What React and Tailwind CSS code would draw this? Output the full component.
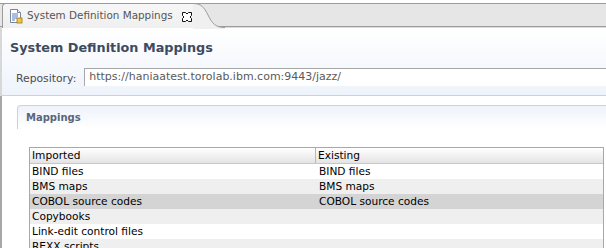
import React from 'react';

const rows = [
  { imported: 'BIND files', existing: 'BIND files' },
  { imported: 'BMS maps', existing: 'BMS maps' },
  { imported: 'COBOL source codes', existing: 'COBOL source codes', selected: true },
  { imported: 'Copybooks', existing: '' },
  { imported: 'Link-edit control files', existing: '' },
  { imported: 'REXX scripts', existing: '' },
];

const DocIcon = () => (
  <svg width="16" height="16" viewBox="0 0 16 16">
    <path d="M2.5 1.5h7l3 3v10h-10z" fill="#fff" stroke="#7a8699" />
    <path d="M9.5 1.5v3h3" fill="#e6ebf2" stroke="#7a8699" />
    <path d="M4 6h6M4 8h6M4 10h5M4 12h3" stroke="#4f7cc4" strokeWidth="1" />
    <rect x="9" y="10" width="5" height="5" fill="#f5c542" stroke="#a07818" strokeWidth="0.8" />
  </svg>
);

const CloseIcon = () => (
  <svg width="12" height="12" viewBox="0 0 12 12">
    <path d="M1.5 1.5h3l1.5 1.5 1.5-1.5h3v3l-1.5 1.5 1.5 1.5v3h-3l-1.5-1.5-1.5 1.5h-3v-3l1.5-1.5-1.5-1.5z" fill="#fff" stroke="#111" strokeWidth="1" />
  </svg>
);

export default function App() {
  return (
    <div className="w-[606px] h-[248px] overflow-hidden bg-white text-[11px] text-black" style={{ fontFamily: '"DejaVu Sans", "Liberation Sans", sans-serif' }}>
      {/* tab bar */}
      <div className="pt-[3px] bg-white">
        <div className="relative h-[24px] border-t border-b border-[#9c9c9c] bg-[#e6e6e6] flex">
          <div className="-mt-px -mb-px ml-[2px] flex items-center h-[25px] pl-[5px] pr-[2px] bg-gradient-to-b from-[#f7f7f7] to-[#efefef] border-l border-t border-[#9c9c9c] rounded-tl-[4px] relative">
            <DocIcon />
            <span className="ml-[3px] text-[#555] text-[10.4px]">System Definition Mappings</span>
            <span className="ml-[8px] mt-[1px] flex items-center"><CloseIcon /></span>
            <svg className="absolute right-[-30px] top-[-1px]" width="32" height="26" viewBox="0 0 32 26">
              <path d="M0 0.5 C8 0.5 11 4 15 12 C19 20 22 24.5 32 24.5 L32 26 L0 26z" fill="#f0f0f0" />
              <path d="M0 0.5 C8 0.5 11 4 15 12 C19 20 22 24.5 32 24.5" fill="none" stroke="#9c9c9c" />
            </svg>
          </div>
        </div>
        <div className="h-px bg-[#dcdcdc]" />
      </div>

      {/* header area */}
      <div className="border-l-2 border-[#d8d8d8] bg-gradient-to-b from-white to-[#eef3fb]">
        <div className="h-[40px] flex items-center pl-[8px]">
          <span className="font-bold text-[12.8px] text-[#3e4a5e]">System Definition Mappings</span>
        </div>
        <div className="flex items-start h-[28px] border-b border-[#c5d3e8]">
          <span className="ml-[14px] mt-[3px] text-[#4c4c4c] text-[10.8px]">Repository:</span>
          <div className="ml-[8px] flex-1 h-[18px] border-t border-l border-[#a8a8a8] bg-white flex items-center pl-[4px] text-[#5a5a5a] text-[11px]">
            https://haniaatest.torolab.ibm.com:9443/jazz/
          </div>
        </div>
      </div>

      {/* mappings section */}
      <div className="border-l-2 border-[#a8a8a8] h-[152px] pt-[9px] pl-[15px]">
        <div className="h-[24px] rounded-tl-[4px] border-l border-t border-[#c9d4e3] bg-gradient-to-b from-[#eef3fa] to-white flex items-center pl-[8px]">
          <span className="font-bold text-[10px] text-[#58667c]">Mappings</span>
        </div>
        <div className="mt-[18px] ml-[12px] mr-[2px] border border-[#a8a8a8] border-b-0 text-[10.6px]">
          <div className="flex h-[16px] bg-gradient-to-b from-white to-[#e4e4e4] border-b border-[#c8c8c8] leading-[15px]">
            <div className="w-[286px] pl-[2px] border-r border-[#b8b8b8]">Imported</div>
            <div className="flex-1 pl-[2px]">Existing</div>
          </div>
          {rows.map((r, i) => (
            <div
              key={r.imported}
              className={`flex h-[15px] leading-[15px] ${r.selected ? 'bg-[#d4d4d4]' : i % 2 === 1 ? 'bg-[#efefef]' : 'bg-white'}`}
            >
              <div className="w-[287px] pl-[2px]">{r.imported}</div>
              <div className="flex-1 pl-[2px]">{r.existing}</div>
            </div>
          ))}
        </div>
      </div>
    </div>
  );
}
